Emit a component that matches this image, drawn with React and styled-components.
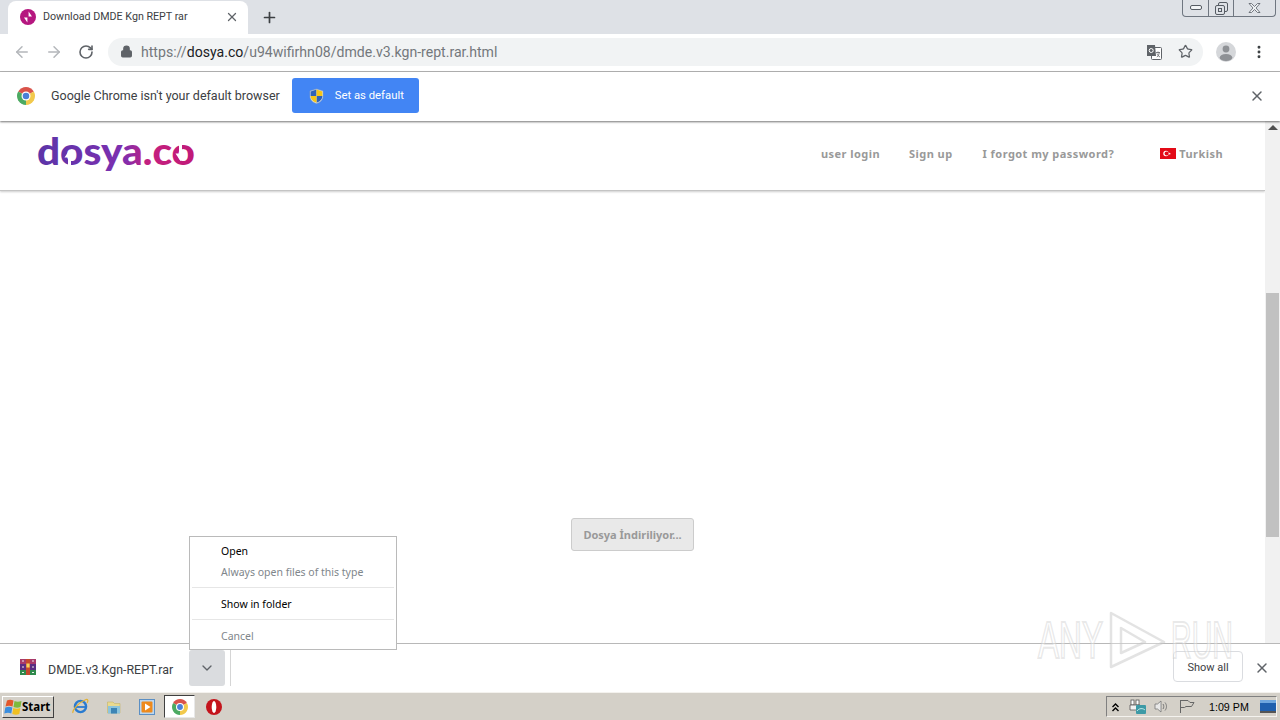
import React from 'react';
import styled, { createGlobalStyle } from 'styled-components';
import { ArrowLeft, ArrowRight, RotateCw, Lock, Star, X, Plus, ChevronDown, EllipsisVertical } from 'lucide-react';

const UI_FONT = 'Roboto, "Noto Sans", sans-serif';
const WEB_FONT = '"Noto Sans", "Open Sans", sans-serif';

const GlobalStyle = createGlobalStyle`
  html, body { margin: 0; padding: 0; background: #fff; }
  * { box-sizing: border-box; }
`;

const Screen = styled.div`
  position: relative;
  width: 1280px;
  height: 720px;
  overflow: hidden;
  display: flex;
  flex-direction: column;
  font-family: ${UI_FONT};
  background: #fff;
`;

// Tab strip
const TabStrip = styled.div`
  flex: 0 0 34px;
  display: flex;
  background: #dee1e6;
  padding-left: 8px;
`;

const Tab = styled.div`
  width: 240px;
  margin-top: 1px;
  background: #fff;
  border-radius: 8px 8px 0 0;
  display: flex;
  align-items: center;
  padding: 0 9px 2px 12px;
`;

const TabTitle = styled.span`
  margin-left: 7px;
  flex: 1;
  font-size: 10.7px;
  color: #3c4043;
  white-space: nowrap;
`;

const NewTab = styled.div`
  margin-left: 13px;
  display: flex;
  align-items: center;
  color: #3c4043;
`;

const WindowButtons = styled.div`
  margin-left: auto;
  margin-right: 4px;
  height: 17px;
  display: flex;
  border: 1px solid #6f7680;
  border-top: none;
  border-radius: 0 0 4px 4px;
`;

const WindowButton = styled.div`
  width: ${(p) => p.$w}px;
  display: flex;
  align-items: center;
  justify-content: center;
  & + & { border-left: 1px solid #6f7680; }
`;

// Toolbar
const Toolbar = styled.div`
  flex: 0 0 38px;
  display: flex;
  align-items: center;
  background: #fff;
  border-bottom: 1px solid #b5b5b5;
  padding: 0 12px 2px 13px;
`;

const NavButton = styled.div`
  width: 18px;
  margin-right: ${(p) => p.$gap}px;
  display: flex;
  justify-content: center;
  color: ${(p) => p.$color};
`;

const Omnibox = styled.div`
  width: 1095px;
  height: 28px;
  background: #f1f3f4;
  border-radius: 14px;
  display: flex;
  align-items: center;
  padding: 0 10px 0 12px;
  color: #5f6368;
`;

const Url = styled.span`
  margin-left: 8px;
  font-family: Roboto, sans-serif;
  font-size: 14.1px;
  color: #74787c;
  white-space: nowrap;
  flex: 1;
`;

const UrlHost = styled.span`
  color: #202124;
`;

const OmniIcon = styled.div`
  display: flex;
  margin-left: ${(p) => p.$gap}px;
  color: #5f6368;
`;

const Avatar = styled.div`
  margin-left: 13px;
  width: 20px;
  height: 20px;
  border-radius: 50%;
  background: #d5d7da;
  overflow: hidden;
`;

const MenuDots = styled.div`
  margin-left: 15px;
  display: flex;
  color: #3c4043;
`;

// Default browser infobar
const Infobar = styled.div`
  flex: 0 0 49px;
  display: flex;
  align-items: center;
  padding: 0 15px 2px 17px;
  background: #fff;
  box-shadow: 0 1px 2px rgba(0, 0, 0, 0.55);
  position: relative;
  z-index: 2;
`;

const InfoText = styled.span`
  margin-left: 16px;
  font-size: 12.5px;
  color: #3c4043;
  white-space: nowrap;
`;

const DefaultButton = styled.div`
  margin-left: 12px;
  width: 127px;
  height: 35px;
  border-radius: 3px;
  background: #4285f4;
  display: flex;
  align-items: center;
  padding-left: 17px;
  color: #fff;
  font-size: 11.3px;
`;

const DefaultLabel = styled.span`
  margin-left: 11px;
`;

const InfoClose = styled.div`
  margin-left: auto;
  display: flex;
  color: #5f6368;
`;

// Page
const PageRow = styled.div`
  flex: 1;
  display: flex;
  min-height: 0;
`;

const Page = styled.div`
  flex: 1;
  display: flex;
  flex-direction: column;
`;

const SiteHeader = styled.div`
  flex: 0 0 70px;
  display: flex;
  align-items: flex-start;
  padding: 12px 42px 0 35px;
  border-bottom: 1px solid #c4c4c4;
  box-shadow: 0 1px 2px rgba(0, 0, 0, 0.2);
`;

const LogoSvg = styled.svg`
  overflow: visible;
  flex: none;
`;

const SiteNav = styled.div`
  margin-left: auto;
  margin-top: 13px;
  display: flex;
  align-items: center;
  font-family: ${WEB_FONT};
  font-size: 11px;
  font-weight: 700;
  letter-spacing: 0.45px;
  color: #999;
  white-space: nowrap;
`;

const NavLink = styled.span`
  margin-left: ${(p) => p.$gap}px;
`;

const Flag = styled.div`
  margin-left: 46px;
  margin-right: 3px;
  margin-bottom: 1px;
  display: flex;
`;

const PageBody = styled.div`
  flex: 1;
  display: flex;
  justify-content: center;
  align-items: flex-start;
  padding-top: 327px;
`;

const DownloadingButton = styled.div`
  width: 123px;
  height: 33px;
  border: 1px solid #ccc;
  border-radius: 3px;
  background: #e9e9e9;
  color: #999;
  font-family: ${WEB_FONT};
  font-size: 11px;
  font-weight: 700;
  display: flex;
  align-items: center;
  justify-content: center;
  padding-bottom: 1px;
`;

const Scrollbar = styled.div`
  width: 15px;
  background: #f1f1f1;
  display: flex;
  flex-direction: column;
  align-items: center;
`;

const ScrollArrow = styled.div`
  margin-top: 4px;
  width: 0;
  height: 0;
  border-left: 5px solid transparent;
  border-right: 5px solid transparent;
  border-bottom: 5px solid #505050;
`;

const ScrollThumb = styled.div`
  margin-top: 163px;
  width: 13px;
  height: 244px;
  background: #c1c1c1;
`;

// Download shelf
const Shelf = styled.div`
  flex: 0 0 49px;
  display: flex;
  align-items: center;
  background: #fff;
  border-top: 1px solid #b8b8b8;
  padding: 0 10px 0 20px;
`;

const FileIcon = styled.div`
  display: flex;
  margin-bottom: 3px;
`;

const FileName = styled.span`
  margin-left: 12px;
  padding-top: 2px;
  font-size: 12.4px;
  color: #3c4043;
  white-space: nowrap;
`;

const ChevronButton = styled.div`
  margin-left: 16px;
  width: 36px;
  height: 36px;
  border-radius: 3px;
  background: #dadcdf;
  display: flex;
  align-items: center;
  justify-content: center;
  color: #5f6368;
`;

const ShelfDivider = styled.div`
  margin-left: 5px;
  width: 1px;
  height: 36px;
  background: #d5d5d5;
`;

const ShowAll = styled.div`
  margin-left: auto;
  margin-bottom: 3px;
  width: 70px;
  height: 31px;
  border: 1px solid #dadce0;
  border-radius: 4px;
  background: #fff;
  display: flex;
  align-items: center;
  justify-content: center;
  padding-top: 1px;
  font-size: 11px;
  color: #3c4043;
`;

const ShelfClose = styled.div`
  margin-left: 11px;
  display: flex;
  color: #5f6368;
`;

// Context menu over the shelf
const ContextMenu = styled.div`
  position: absolute;
  left: 189px;
  top: 536px;
  width: 208px;
  height: 114px;
  background: #fff;
  border: 1px solid #bababa;
  padding-top: 3px;
  z-index: 5;
`;

const MenuItem = styled.div`
  height: 21px;
  padding-left: 31px;
  display: flex;
  align-items: center;
  font-family: ${WEB_FONT};
  font-size: 10.5px;
  color: ${(p) => (p.$disabled ? '#80868b' : '#000')};
`;

const MenuLine = styled.div`
  height: 1px;
  margin: 5px 2px;
  background: #e6e6e6;
`;

// Watermark
const Watermark = styled.div`
  position: absolute;
  left: 1038px;
  top: 608px;
  width: 198px;
  height: 64px;
  display: flex;
  align-items: center;
  z-index: 6;
  pointer-events: none;
  font-family: "Liberation Sans", sans-serif;
  font-size: 51px;
  color: rgba(255, 255, 255, 0.35);
  -webkit-text-stroke: 2px rgba(205, 205, 205, 0.45);
`;

const WatermarkWord = styled.span`
  display: block;
  width: ${(p) => p.$w}px;
  transform: scaleX(${(p) => p.$sx});
  transform-origin: left center;
  white-space: nowrap;
`;

const WatermarkPlay = styled.svg`
  margin: 0 3px 0 5px;
  flex: none;
`;

// Taskbar
const Taskbar = styled.div`
  flex: 0 0 28px;
  display: flex;
  align-items: center;
  background: #d4d0c8;
  border-top: 1px solid #f4f2ee;
  padding: 0 3px 0 2px;
`;

const StartButton = styled.div`
  width: 52px;
  height: 22px;
  display: flex;
  align-items: center;
  padding-left: 1px;
  background: #d4d0c8;
  border: 1px solid;
  border-color: #fff #404040 #404040 #fff;
  font-family: ${WEB_FONT};
  font-size: 11.5px;
  font-weight: 700;
  color: #000;
`;

const QuickIcon = styled.div`
  margin-left: ${(p) => p.$gap}px;
  display: flex;
`;

const ActiveTask = styled.div`
  margin-left: 9px;
  width: 31px;
  height: 23px;
  background: #fff;
  border: 1px solid;
  border-color: #404040 #e8e8e8 #e8e8e8 #404040;
  display: flex;
  align-items: center;
  justify-content: center;
`;

const Tray = styled.div`
  margin-left: auto;
  width: 171px;
  height: 21px;
  display: flex;
  align-items: center;
  border: 1px solid;
  border-color: #808080 #f4f2ee #f4f2ee #808080;
  padding-left: 4px;
`;

const TrayIcon = styled.div`
  margin-left: ${(p) => p.$gap}px;
  display: flex;
`;

const Clock = styled.span`
  margin-left: 14px;
  font-family: "Liberation Sans", sans-serif;
  font-size: 10.7px;
  color: #000;
  white-space: nowrap;
`;

// Drawn icons
const ChromeLogo = ({ size = 18 }) => (
  <svg width={size} height={size} viewBox="2 2 44 44">
    <path d="M24 24 L43.05 13 A22 22 0 0 0 4.95 13 Z" fill="#d9534a" />
    <path d="M24 24 L24 46 A22 22 0 0 0 43.05 13 Z" fill="#f2c94c" />
    <path d="M24 24 L4.95 13 A22 22 0 0 0 24 46 Z" fill="#4caa62" />
    <circle cx="24" cy="24" r="11" fill="#fff" />
    <circle cx="24" cy="24" r="8" fill="#4a80d8" />
  </svg>
);

const OperaIcon = ({ size = 16 }) => (
  <svg width={size} height={size} viewBox="0 0 16 16">
    <circle cx="8" cy="8" r="8" fill="#c4141c" />
    <ellipse cx="8" cy="8" rx="2.3" ry="6" fill="#fff" />
  </svg>
);

const SiteFavicon = () => (
  <svg width="16" height="16" viewBox="0 0 16 16">
    <circle cx="8" cy="8" r="8" fill="#b5177f" />
    <path d="M7.4 1.5 V8.5 H4 L7.4 13.5 Z" fill="#fff" />
    <path d="M8.6 14.5 V7.5 H12 L8.6 2.5 Z" fill="#fff" />
  </svg>
);

const ShieldIcon = () => (
  <svg width="15" height="16" viewBox="0 0 15 16">
    <path d="M7.5 1 L14 3 V8 C14 12 11 14.5 7.5 15.5 C4 14.5 1 12 1 8 V3 Z" fill="#e6eef8" stroke="#8aa0bf" strokeWidth="0.6" />
    <path d="M7.5 1.6 V8 H1.6 V3.4 Z" fill="#2f62b8" />
    <path d="M7.5 1.6 L13.4 3.4 V8 H7.5 Z" fill="#f5c518" />
    <path d="M7.5 8 H13.4 C13.2 11.5 10.6 13.8 7.5 14.8 Z" fill="#2f62b8" />
    <path d="M7.5 8 V14.8 C4.4 13.8 1.8 11.5 1.6 8 Z" fill="#f5c518" />
  </svg>
);

const TranslateIcon = () => (
  <svg width="16" height="16" viewBox="0 0 16 16">
    <rect x="5.5" y="3.5" width="10" height="12" rx="1" fill="#fff" stroke="#5f6368" />
    <path d="M1 1 H9 L10 12 H1 Z" fill="#5f6368" />
    <circle cx="5.2" cy="6.5" r="2" fill="none" stroke="#fff" strokeWidth="1" />
    <path d="M10 8.5 H14 M12 7.5 V8.5 M10.8 13 C12.5 12 13 10.5 13.2 8.5 M11 9.5 C11.5 11 12.5 12.3 14 13" fill="none" stroke="#5f6368" strokeWidth="0.8" />
  </svg>
);

const AvatarGlyph = () => (
  <svg width="20" height="20" viewBox="0 0 20 20">
    <circle cx="10" cy="7" r="3.4" fill="#8e9195" />
    <ellipse cx="10" cy="15.5" rx="6.3" ry="3.6" fill="#8e9195" />
  </svg>
);

const TurkishFlag = () => (
  <svg width="16" height="11" viewBox="0 0 16 11">
    <rect width="16" height="11" fill="#e30a17" />
    <circle cx="6" cy="5.5" r="2.7" fill="#fff" />
    <circle cx="6.7" cy="5.5" r="2.1" fill="#e30a17" />
    <path d="M9.5 4.4 l0.4 0.8 0.9 0.1 -0.7 0.6 0.2 0.9 -0.8 -0.5 -0.8 0.5 0.2 -0.9 -0.7 -0.6 0.9 -0.1z" fill="#fff" />
  </svg>
);

const RarIcon = () => (
  <svg width="16" height="16" viewBox="0 0 16 16">
    <rect width="16" height="5" fill="#a83a6a" />
    <rect y="5" width="16" height="6" fill="#5a2d82" />
    <rect y="11" width="16" height="5" fill="#2f8a4c" />
    <rect x="6" width="4" height="16" fill="#c4482e" />
    <rect x="6.4" y="4.5" width="3.2" height="4" fill="#f3d35c" />
    <path d="M2 2 H4 M12 2 H14 M2 8 H4 M12 8 H14 M2 13.5 H4 M12 13.5 H14" stroke="#e9e9e9" strokeWidth="1" />
  </svg>
);

const WindowsFlag = () => (
  <svg width="18" height="18" viewBox="0 0 18 18">
    <path d="M3 2.5 C5 1.5 7 1.5 9.5 2.5 L8.5 8.5 C6 7.5 4 7.5 1.5 8.5z" fill="#e2572b" />
    <path d="M10.5 3 C12.5 4 15 4 17.5 3 L16.5 9 C14.5 10 12 10 9.5 9z" fill="#7db93c" />
    <path d="M1.3 9.5 C4 8.5 6 8.5 8.3 9.5 L7.3 15.5 C5 14.5 3 14.5 0.3 15.5z" fill="#3a8ede" />
    <path d="M9.3 10 C11.5 11 14 11 16.3 10 L15.3 16 C13 17 11 17 8.3 16z" fill="#f0c020" />
  </svg>
);

const IEIcon = () => (
  <svg width="17" height="17" viewBox="0 0 17 17">
    <circle cx="8.5" cy="8.5" r="5.6" fill="none" stroke="#2a7bd0" strokeWidth="2.4" />
    <path d="M3 9 H14" stroke="#2a7bd0" strokeWidth="1.8" />
    <path d="M1 15 C0 13 5 5 14 1.5 C16 1 16.5 3 15 5" fill="none" stroke="#e3b234" strokeWidth="1.2" />
  </svg>
);

const FolderIcon = () => (
  <svg width="16" height="16" viewBox="0 0 16 16">
    <path d="M1.5 3 H7 L8.5 4.5 H14 V14 H1.5 Z" fill="#e9d98f" stroke="#c2b36a" strokeWidth="0.6" />
    <rect x="2" y="7" width="12" height="7.5" fill="#8cc4dd" />
    <rect x="5" y="9" width="6" height="5.5" fill="#3c84b5" />
  </svg>
);

const MediaIcon = () => (
  <svg width="16" height="16" viewBox="0 0 16 16">
    <rect x="0.5" y="0.5" width="15" height="15" fill="#bcd6ee" stroke="#5b8fc4" />
    <rect x="2.5" y="2.5" width="11" height="11" rx="1" fill="#ee8a1d" />
    <path d="M6 4.5 L11.5 8 L6 11.5 Z" fill="#fff" />
  </svg>
);

const TrayChevrons = () => (
  <svg width="9" height="10" viewBox="0 0 9 10">
    <path d="M1.5 5 L4.5 2 L7.5 5 M1.5 9 L4.5 6 L7.5 9" fill="none" stroke="#000" strokeWidth="1.4" />
  </svg>
);

const NetworkIcon = () => (
  <svg width="18" height="16" viewBox="0 0 18 16">
    <rect x="2" y="1" width="3" height="5" fill="#fff" stroke="#555" strokeWidth="0.8" />
    <rect x="7" y="1" width="3" height="5" fill="#fff" stroke="#555" strokeWidth="0.8" />
    <path d="M1 6 H11 V11 H1z" fill="#f2f2f2" stroke="#555" strokeWidth="0.8" />
    <rect x="7" y="6" width="10" height="9" rx="1" fill="#3d9aa6" />
    <path d="M8 12 C10 9 14 9 16 11" fill="none" stroke="#bfe8e8" />
  </svg>
);

const SpeakerIcon = () => (
  <svg width="16" height="15" viewBox="0 0 16 15">
    <path d="M1 5 H3.5 L7 2 V13 L3.5 10 H1 Z" fill="#e8e8e8" stroke="#777" strokeWidth="0.8" />
    <path d="M9 5 C10 6.5 10 8.5 9 10 M11 3.5 C13 6 13 9 11 11.5" fill="none" stroke="#777" />
  </svg>
);

const FlagIcon = () => (
  <svg width="16" height="15" viewBox="0 0 16 15">
    <path d="M1.5 1 V14 M1.5 1.5 H9 L11 3.5 H15 L12.5 7.5 H7 L5.5 8.5 H1.5" fill="none" stroke="#666" />
  </svg>
);

const DesktopIcon = () => (
  <svg width="16" height="13" viewBox="0 0 16 13">
    <rect width="16" height="11" fill="#1f5fae" />
    <rect width="16" height="3" fill="#6fa6de" />
    <rect y="11" width="16" height="2" fill="#555" />
  </svg>
);

const WinMinimize = () => (
  <svg width="12" height="6" viewBox="0 0 12 6">
    <rect x="0.5" y="0.5" width="11" height="4" rx="1.5" fill="#f2f4f6" stroke="#555b63" />
  </svg>
);

const WinRestore = () => (
  <svg width="13" height="13" viewBox="0 0 13 13">
    <rect x="3.5" y="0.5" width="9" height="9" rx="1.5" fill="none" stroke="#555b63" />
    <rect x="0.5" y="3.5" width="9" height="9" rx="1.5" fill="#dee1e6" stroke="#555b63" />
    <rect x="3.5" y="6.5" width="3" height="3" fill="none" stroke="#555b63" />
  </svg>
);

const WinClose = () => (
  <svg width="13" height="10" viewBox="0 0 13 10">
    <path d="M1 0.5 H3.5 L6.5 3.5 L9.5 0.5 H12 L8 5 L12 9.5 H9.5 L6.5 6.5 L3.5 9.5 H1 L5 5 Z" fill="#f2f4f6" stroke="#555b63" strokeWidth="0.8" />
  </svg>
);

const DosyaLogo = () => (
  <LogoSvg width="164" height="46" viewBox="0 0 164 46">
    <defs>
      <linearGradient id="logoFill" x1="0" y1="0" x2="1" y2="0">
        <stop offset="0" stopColor="#5b35a8" />
        <stop offset="0.55" stopColor="#7d2fb0" />
        <stop offset="0.7" stopColor="#c4207f" />
        <stop offset="1" stopColor="#c01a78" />
      </linearGradient>
    </defs>
    <text x="2" y="32" textLength="158" lengthAdjust="spacingAndGlyphs" fontFamily="Lato, sans-serif" fontWeight="900" fontSize="38" fill="url(#logoFill)">dosya.co</text>
    <path d="M33 34 V24.5 H29.5 L34.5 17 L39.5 24.5 H36 V34 Z" fill="#fff" />
    <path d="M144 11 V20.5 H140.5 L145.5 28 L150.5 20.5 H147 V11 Z" fill="#fff" />
  </LogoSvg>
);

const App = () => {
  return (
    <Screen>
      <GlobalStyle />
      <TabStrip>
        <Tab>
          <SiteFavicon />
          <TabTitle>Download DMDE Kgn REPT rar</TabTitle>
          <X size={14} color="#5f6368" strokeWidth={2.2} />
        </Tab>
        <NewTab>
          <Plus size={17} strokeWidth={2.4} />
        </NewTab>
        <WindowButtons>
          <WindowButton $w={25}><WinMinimize /></WindowButton>
          <WindowButton $w={25}><WinRestore /></WindowButton>
          <WindowButton $w={42}><WinClose /></WindowButton>
        </WindowButtons>
      </TabStrip>

      <Toolbar>
        <NavButton $gap={14} $color="#b4b7bb"><ArrowLeft size={18} /></NavButton>
        <NavButton $gap={14} $color="#b4b7bb"><ArrowRight size={18} /></NavButton>
        <NavButton $gap={13} $color="#5f6368"><RotateCw size={16} strokeWidth={2.4} /></NavButton>
        <Omnibox>
          <Lock size={13} fill="currentColor" strokeWidth={2.2} />
          <Url>
            https://<UrlHost>dosya.co</UrlHost>/u94wifirhn08/dmde.v3.kgn-rept.rar.html
          </Url>
          <OmniIcon $gap={0}><TranslateIcon /></OmniIcon>
          <OmniIcon $gap={16}><Star size={15} strokeWidth={2} /></OmniIcon>
        </Omnibox>
        <Avatar><AvatarGlyph /></Avatar>
        <MenuDots><EllipsisVertical size={16} strokeWidth={2.4} /></MenuDots>
      </Toolbar>

      <Infobar>
        <ChromeLogo />
        <InfoText>Google Chrome isn&apos;t your default browser</InfoText>
        <DefaultButton>
          <ShieldIcon />
          <DefaultLabel>Set as default</DefaultLabel>
        </DefaultButton>
        <InfoClose><X size={16} strokeWidth={2.2} /></InfoClose>
      </Infobar>

      <PageRow>
        <Page>
          <SiteHeader>
            <DosyaLogo />
            <SiteNav>
              <NavLink $gap={0}>user login</NavLink>
              <NavLink $gap={29}>Sign up</NavLink>
              <NavLink $gap={30}>I forgot my password?</NavLink>
              <Flag><TurkishFlag /></Flag>
              <span>Turkish</span>
            </SiteNav>
          </SiteHeader>
          <PageBody>
            <DownloadingButton>Dosya İndiriliyor...</DownloadingButton>
          </PageBody>
        </Page>
        <Scrollbar>
          <ScrollArrow />
          <ScrollThumb />
        </Scrollbar>
      </PageRow>

      <Shelf>
        <FileIcon><RarIcon /></FileIcon>
        <FileName>DMDE.v3.Kgn-REPT.rar</FileName>
        <ChevronButton><ChevronDown size={16} strokeWidth={2} /></ChevronButton>
        <ShelfDivider />
        <ShowAll>Show all</ShowAll>
        <ShelfClose><X size={16} strokeWidth={2.2} /></ShelfClose>
      </Shelf>

      <Taskbar>
        <StartButton>
          <WindowsFlag />
          <span>Start</span>
        </StartButton>
        <QuickIcon $gap={18}><IEIcon /></QuickIcon>
        <QuickIcon $gap={17}><FolderIcon /></QuickIcon>
        <QuickIcon $gap={17}><MediaIcon /></QuickIcon>
        <ActiveTask><ChromeLogo size={16} /></ActiveTask>
        <QuickIcon $gap={11}><OperaIcon /></QuickIcon>
        <Tray>
          <TrayIcon $gap={0}><TrayChevrons /></TrayIcon>
          <TrayIcon $gap={9}><NetworkIcon /></TrayIcon>
          <TrayIcon $gap={7}><SpeakerIcon /></TrayIcon>
          <TrayIcon $gap={9}><FlagIcon /></TrayIcon>
          <Clock>1:09 PM</Clock>
          <TrayIcon $gap={11}><DesktopIcon /></TrayIcon>
        </Tray>
      </Taskbar>

      <ContextMenu>
        <MenuItem>Open</MenuItem>
        <MenuItem $disabled>Always open files of this type</MenuItem>
        <MenuLine />
        <MenuItem>Show in folder</MenuItem>
        <MenuLine />
        <MenuItem $disabled>Cancel</MenuItem>
      </ContextMenu>

      <Watermark>
        <WatermarkWord $w={65} $sx={0.62}>ANY</WatermarkWord>
        <WatermarkPlay width="60" height="62" viewBox="0 0 60 62">
          <path d="M3 4 L3 58 L56 33 Z M13 19 L13 44 L37 33 Z" fill="rgba(255,255,255,0.3)" stroke="rgba(200,200,200,0.5)" strokeWidth="2.5" strokeLinejoin="round" />
        </WatermarkPlay>
        <WatermarkWord $w={62} $sx={0.56}>RUN</WatermarkWord>
      </Watermark>
    </Screen>
  );
};

export default App;
